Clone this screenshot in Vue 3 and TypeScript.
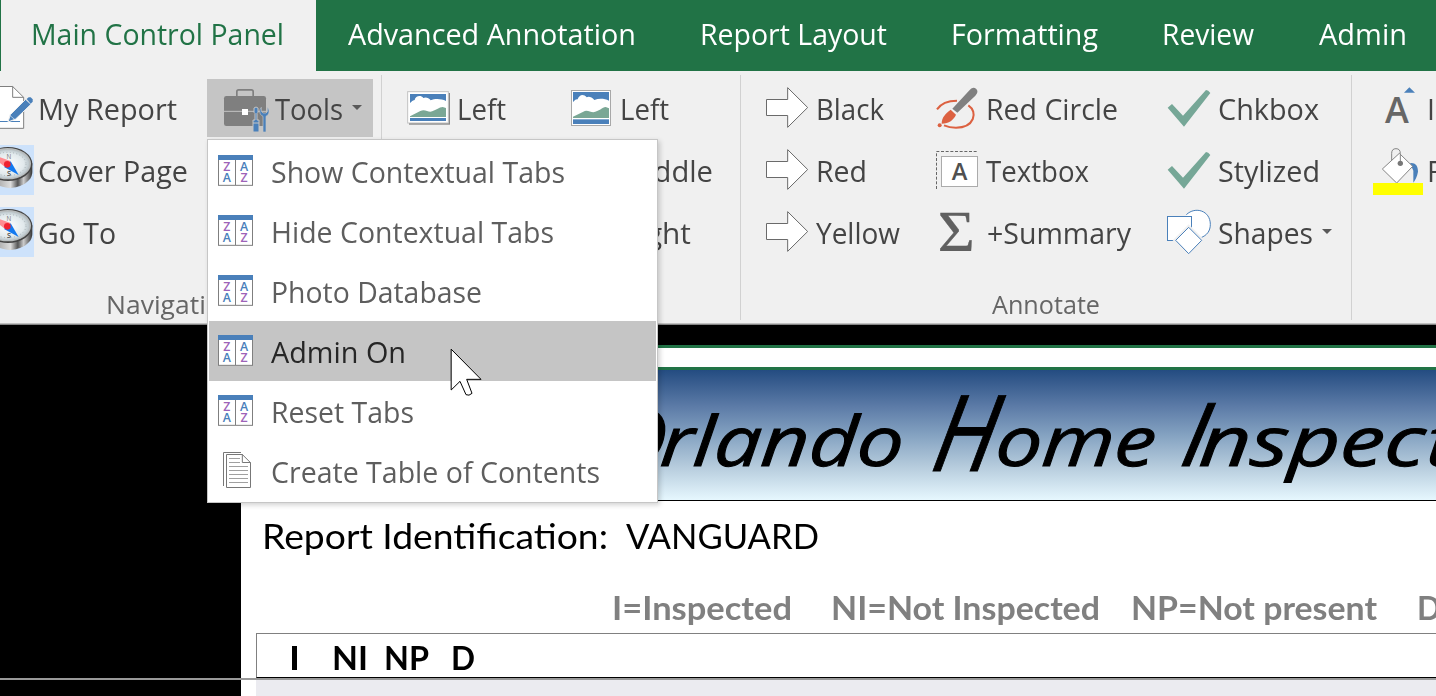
<script setup lang="ts">
import type { Directive } from 'vue'

interface Tab { label: string; width: number; text: number }
interface Command { label: string; text: number; icon: string; box: string; iconWidth: number; caret?: boolean; active?: boolean }
interface Group { name: string; caption: string; columns: Command[][] }
interface MenuItem { label: string; text: number; icon: 'sort' | 'page'; hover?: boolean }
interface Stroke { text: string; x: number; y: number; size: number; length: number; skew: number }

// Condenses or widens a label so that it occupies exactly the given width.
const vFit: Directive<HTMLElement, number> = {
  mounted(el, { value }) {
    const natural = el.getBoundingClientRect().width
    if (!natural) return
    el.style.transform = `scaleX(${value / natural})`
    el.style.marginRight = `${value - natural}px`
  }
}

const tabs: Tab[] = [
  { label: 'Main Control Panel', width: 315, text: 253 },
  { label: 'Advanced Annotation', width: 351, text: 288 },
  { label: 'Report Layout', width: 253, text: 187 },
  { label: 'Formatting', width: 208, text: 147 },
  { label: 'Review', width: 160, text: 92 },
  { label: 'Admin', width: 149, text: 88 }
]

const groups: Group[] = [
  {
    name: 'navigation', caption: 'Navigation', columns: [
      [
        { label: 'My Report', text: 139, icon: 'report', box: '0 12 111 174', iconWidth: 37 },
        { label: 'Cover Page', text: 150, icon: 'compass', box: '0 198 111 174', iconWidth: 37 },
        { label: 'Go To', text: 78, icon: 'compass', box: '0 198 111 174', iconWidth: 37 }
      ],
      [{ label: 'Tools', text: 68, icon: 'toolbox', box: '6 12 201 174', iconWidth: 67, caret: true, active: true }]
    ]
  },
  {
    name: 'pictures', caption: '', columns: [
      [{ label: 'Left', text: 49, icon: 'photo', box: '0 12 168 174', iconWidth: 56 }],
      [
        { label: 'Left', text: 49, icon: 'inline', box: '480 12 177 174', iconWidth: 59 },
        { label: 'Middle', text: 93, icon: 'none', box: '480 198 177 174', iconWidth: 59 },
        { label: 'Right', text: 71, icon: 'none', box: '480 384 177 174', iconWidth: 59 }
      ]
    ]
  },
  {
    name: 'annotate', caption: 'Annotate', columns: [
      [
        { label: 'Black', text: 68, icon: 'arrow', box: '30 12 195 174', iconWidth: 65 },
        { label: 'Red', text: 51, icon: 'arrow', box: '30 12 195 174', iconWidth: 65 },
        { label: 'Yellow', text: 84, icon: 'arrow', box: '30 12 195 174', iconWidth: 65 }
      ],
      [
        { label: 'Red Circle', text: 132, icon: 'brush', box: '0 12 165 174', iconWidth: 55 },
        { label: 'Textbox', text: 103, icon: 'textbox', box: '0 198 165 174', iconWidth: 55 },
        { label: '+Summary', text: 144, icon: 'sigma', box: '0 384 165 174', iconWidth: 56 }
      ],
      [
        { label: 'Chkbox', text: 101, icon: 'check', box: '30 12 171 174', iconWidth: 57 },
        { label: 'Stylized', text: 102, icon: 'check', box: '30 12 171 174', iconWidth: 57 },
        { label: 'Shapes', text: 95, icon: 'shapes', box: '30 384 171 174', iconWidth: 57, caret: true }
      ]
    ]
  },
  {
    name: 'font', caption: '', columns: [
      [
        { label: 'I', text: 8, icon: 'grow', box: '660 12 168 174', iconWidth: 56 },
        { label: 'F', text: 15, icon: 'bucket', box: '660 198 168 174', iconWidth: 56 }
      ]
    ]
  }
]

const menu: MenuItem[] = [
  { label: 'Show Contextual Tabs', text: 294, icon: 'sort' },
  { label: 'Hide Contextual Tabs', text: 283, icon: 'sort' },
  { label: 'Photo Database', text: 211, icon: 'sort' },
  { label: 'Admin On', text: 135, icon: 'sort', hover: true },
  { label: 'Reset Tabs', text: 143, icon: 'sort' },
  { label: 'Create Table of Contents', text: 329, icon: 'page' }
]

const lettering: Stroke[] = [
  { text: 'O', x: 354, y: 96, size: 80, length: 71, skew: -3 },
  { text: 'rlando', x: 418, y: 96, size: 69, length: 243, skew: -5 },
  { text: 'H', x: 688, y: 101, size: 106, length: 62, skew: -11 },
  { text: 'ome', x: 753, y: 96, size: 69, length: 160, skew: -5 },
  { text: 'I', x: 937, y: 96, size: 88, length: 25, skew: -11 },
  { text: 'nspec', x: 957, y: 96, size: 69, length: 225, skew: -5 },
  { text: 't', x: 1184, y: 96, size: 69, length: 28, skew: -5 }
]
</script>

<template>
  <div class="window">
    <nav class="tabs">
      <div v-for="(tab, i) in tabs" :key="tab.label" class="tab" :class="{ current: i === 0 }" :style="{ width: tab.width + 'px' }">
        <span v-fit="tab.text" class="fit">{{ tab.label }}</span>
      </div>
    </nav>

    <section class="ribbon">
      <div v-for="group in groups" :key="group.name" class="group" :class="group.name">
        <div class="columns">
          <div v-for="(column, c) in group.columns" :key="c" class="column">
            <div v-for="cmd in column" :key="cmd.label" class="command" :class="{ active: cmd.active }">
              <svg class="icon" :width="cmd.iconWidth" height="58" :viewBox="cmd.box">
                <g v-if="cmd.icon === 'report'">
                  <path d="M-12 34.500H38L71 67V160H-12Z" fill="#fff" stroke="#7f7f7f" stroke-width="3" />
                  <path d="M38 34V67H71" fill="none" stroke="#7f7f7f" stroke-width="3" />
                  <path d="M0 139.500H60" stroke="#4a80ba" stroke-width="3" />
                  <path d="M24 141L31 119L77 73L93 88L47 132Z" fill="#4a80ba" stroke="#f0f0f0" stroke-width="3" />
                  <path d="M80 72L86 67H92L98 73V80L92 86Z" fill="#4a80ba" />
                  <path d="M29 121L45 134" stroke="#dce8f4" stroke-width="2" />
                </g>
                <g v-else-if="cmd.icon === 'compass'">
                  <defs>
                    <linearGradient id="rim" x1="0" x2="1">
                      <stop offset="0" stop-color="#777" /><stop offset=".55" stop-color="#ddd" /><stop offset=".7" stop-color="#555" /><stop offset=".82" stop-color="#ccc" /><stop offset="1" stop-color="#333" />
                    </linearGradient>
                    <radialGradient id="dial"><stop offset="0" stop-color="#fff" /><stop offset=".75" stop-color="#e1e9ec" /><stop offset="1" stop-color="#bac5ca" /></radialGradient>
                  </defs>
                  <rect x="0" y="210" width="102" height="150" fill="#cde2fb" />
                  <path d="M-48 270V286C-40 320 0 338 28 339C65 337 97 318 97 290V265Z" fill="url(#rim)" />
                  <ellipse cx="24" cy="267" rx="73" ry="51" fill="#444" />
                  <ellipse cx="23" cy="266" rx="70" ry="47" fill="#b8bcbd" />
                  <ellipse cx="23" cy="267" rx="65" ry="43" fill="url(#dial)" />
                  <ellipse cx="23" cy="267" rx="55" ry="35" fill="none" stroke="#9aa4a8" stroke-width="3" stroke-dasharray="2 8" />
                  <text x="27" y="251" font-size="19" fill="#777" class="glyph">N</text>
                  <text x="27" y="304" font-size="22" fill="#444" class="glyph heavy">S</text>
                  <path d="M-10 243L32 258L12 274L-10 256Z" fill="#ff8c91" />
                  <path d="M32 259L56 300L12 276Z" fill="#1379f0" />
                  <circle cx="22" cy="268" r="10" fill="#f02230" />
                </g>
                <g v-else-if="cmd.icon === 'toolbox'">
                  <path d="M95.500 63V50Q95.500 44.500 101 44.500H139Q144.500 44.500 144.500 50V63" fill="none" stroke="#7f7f7f" stroke-width="5" />
                  <rect x="57" y="63" width="126" height="90" rx="7" fill="#7f7f7f" />
                  <path d="M57 109H183" stroke="#c5c5c5" stroke-width="3" />
                  <rect x="111" y="102" width="18" height="18" fill="#fff" />
                  <path d="M147 99L153 96L159 99V112L156 115V135H162V171H144V135H150V115L147 112Z" fill="#4a80ba" stroke="#c5c5c5" stroke-width="3" />
                  <path d="M144 144H162" stroke="#c5c5c5" stroke-width="3" />
                  <path d="M169 97C162 104 162 119 174 124V171H183V124C195 118 194 104 187 97V110L183 114H174L169 109Z" fill="#4a80ba" stroke="#c5c5c5" stroke-width="2" />
                </g>
                <g v-else-if="cmd.icon === 'photo'">
                  <rect x="27" y="54" width="123" height="95" fill="#888" class="soft" />
                  <rect x="23" y="50" width="122" height="94" fill="#fff" stroke="#c2c2c2" stroke-width="3" />
                  <path d="M30 57H138V78C124 71 105 70 92 76C86 67 76 66 70 69C62 58 46 63 44 75C37 76 34 81 30 84Z" fill="#4a80ba" />
                  <path d="M30 126V124L61 108C72 102 82 109 91 110C107 107 118 96 128 96L138 99V126Z" fill="#7aa795" />
                  <rect x="30" y="129" width="108" height="9" fill="#4a80ba" />
                </g>
                <g v-else-if="cmd.icon === 'inline'">
                  <rect x="514.500" y="46.500" width="117" height="105" fill="#fff" stroke="#a8a8a8" stroke-width="3" />
                  <path d="M519 51H627V77C613 70 596 70 583 75C575 65 565 63 560 67C550 55 537 60 533 73C526 72 523 79 519 81Z" fill="#4a80ba" />
                  <path d="M519 129V125L550 110C560 103 570 111 580 112C597 109 607 97 617 96L627 100V129Z" fill="#7aa795" />
                  <rect x="519" y="133" width="108" height="14" fill="#4a80ba" />
                </g>
                <path v-else-if="cmd.icon === 'arrow'" d="M79.500 73.500H143V38L203 97.500L143 157V121.500H79.500Z" fill="#fff" stroke="#6a6a6a" stroke-width="3" />
                <g v-else-if="cmd.icon === 'brush'">
                  <path d="M21 103C33 85 56 77 81 77M115 91C145 111 133 158 78 158C63 158 51 155 42 151" fill="none" stroke="#dc6141" stroke-width="6" />
                  <path d="M67 101L117 47Q128 33 139 42Q147 50 136 62L82 113Z" fill="#808080" />
                  <path d="M62 104L78 119C71 135 57 145 35 146C35 127 46 116 62 104Z" fill="#dc6141" />
                  <circle cx="29" cy="151" r="6" fill="#dc6141" />
                </g>
                <g v-else-if="cmd.icon === 'textbox'">
                  <path d="M19.500 342V229.500H144" fill="none" stroke="#666" stroke-width="3" stroke-dasharray="9 5" />
                  <rect x="34.500" y="244.500" width="108" height="90" fill="#fff" stroke="#ababab" stroke-width="3" />
                  <text x="88.500" y="315" font-size="71" fill="#505050" class="glyph heavy">A</text>
                </g>
                <text v-else-if="cmd.icon === 'sigma'" x="22" y="528" font-size="173" textLength="111" lengthAdjust="spacingAndGlyphs" fill="#606060" class="sigma">Σ</text>
                <path v-else-if="cmd.icon === 'check'" d="M53 98L66 87L99 122L168 45Q175 45 181 54L102 155Z" fill="#76a797" />
                <g v-else-if="cmd.icon === 'shapes'" fill="#fff" stroke="#4a80ba" stroke-width="3">
                  <path d="M109 419C136 393 181 407 181 448C181 469 170 481 153 488L109 448Z" stroke="none" />
                  <path d="M109 419C136 393 181 407 181 448C181 469 170 481 153 488" fill="none" />
                  <rect x="52.500" y="424.500" width="72" height="72" />
                  <path d="M116 448L164 496L116 544L68 496Z" fill="#f0f0f0" stroke="none" />
                  <path d="M116 457L155 496L116 536L77 496Z" />
                </g>
                <g v-else-if="cmd.icon === 'grow'">
                  <text x="741" y="144" font-size="108" fill="#666" class="glyph heavy">A</text>
                  <path d="M762 53L778 37L795 53Z" fill="#4a80ba" />
                </g>
                <g v-else-if="cmd.icon === 'bucket'">
                  <path d="M780 264C800 262 804 277 804 290C802 305 794 317 790 323V287Z" fill="#4a80ba" />
                  <path d="M748 235L788 274L740 324L697 282Z" fill="#fff" stroke="#858585" stroke-width="3" />
                  <path d="M725 256V235Q725 221 738 221Q751 221 751 236V263" fill="none" stroke="#858585" stroke-width="3" />
                  <circle cx="751" cy="265" r="8" fill="#777" />
                  <rect x="669" y="324" width="150" height="36" fill="#ff0" />
                </g>
              </svg>
              <span v-fit="cmd.text" class="fit label">{{ cmd.label }}</span>
              <svg v-if="cmd.caret" class="caret" width="10" height="5" viewBox="0 0 10 5"><path d="M0 0H10L5 5Z" fill="#595959" /></svg>
            </div>
          </div>
        </div>
        <div class="caption"><span v-if="group.caption" v-fit="group.name === 'annotate' ? 108 : 132" class="fit">{{ group.caption }}</span></div>
      </div>
    </section>

    <main class="workspace">
      <div class="sheet">
        <div class="blank-row"></div>
        <header class="banner">
          <svg width="1195" height="130" viewBox="0 0 1195 130">
            <g v-for="s in lettering" :key="s.text" :transform="`translate(${s.x} ${s.y}) skewX(${s.skew})`">
              <text :font-size="s.size" :textLength="s.length" lengthAdjust="spacingAndGlyphs">{{ s.text }}</text>
            </g>
          </svg>
        </header>
        <div class="identification">
          <span v-fit="346" class="fit">Report Identification:</span>
          <span v-fit="193" class="fit value">VANGUARD</span>
        </div>
        <div class="legend">
          <span v-fit="180" class="fit">I=Inspected</span>
          <span v-fit="269" class="fit">NI=Not Inspected</span>
          <span v-fit="246" class="fit">NP=Not present</span>
          <span v-fit="24" class="fit">D</span>
        </div>
        <div class="table-head">
          <span v-fit="11" class="fit">I</span>
          <span v-fit="36" class="fit">NI</span>
          <span v-fit="45" class="fit">NP</span>
          <span v-fit="24" class="fit">D</span>
        </div>
        <div class="table-body"></div>
      </div>
      <div class="freeze-line"></div>
    </main>

    <div class="menu">
      <div v-for="item in menu" :key="item.label" class="menu-item" :class="{ hover: item.hover }">
        <svg v-if="item.icon === 'sort'" width="62" height="60" viewBox="12 198 186 180">
          <rect x="40.500" y="243" width="102" height="88" fill="#fff" stroke="#7f7f7f" stroke-width="3" />
          <path d="M91.500 254V330" stroke="#7f7f7f" stroke-width="3" />
          <rect x="39" y="240" width="105" height="15" fill="#4a80ba" />
          <g class="glyph sort" font-size="37">
            <text x="65.500" y="288" fill="#9d63b8">Z</text><text x="65.500" y="321" fill="#4a80ba">A</text>
            <text x="117.500" y="288" fill="#4a80ba">A</text><text x="117.500" y="321" fill="#9d63b8">Z</text>
          </g>
        </svg>
        <svg v-else width="62" height="60" viewBox="12 363 186 180">
          <path d="M55.500 498V397.500H108" fill="none" stroke="#777" stroke-width="3" />
          <path d="M64.500 403.500H112L136.500 428V502.500H64.500Z" fill="#fff" stroke="#777" stroke-width="3" />
          <path d="M112 403V427.500H137" fill="none" stroke="#777" stroke-width="3" />
          <path d="M72 415.500H105M72 427.500H105M72 439.500H129M72 451.500H129M72 463.500H129M72 475.500H129M72 487.500H129" stroke="#a0a0a0" stroke-width="3" />
        </svg>
        <span v-fit="item.text" class="fit">{{ item.label }}</span>
      </div>
    </div>

    <svg class="pointer" width="34" height="50" viewBox="737 85 102 150">
      <path d="M740.500 88.500V211L767 185L785 225Q794 230 803 221L787 179H830Z" fill="#fff" stroke="#000" stroke-width="3" />
    </svg>
  </div>
</template>

<style>
body { margin: 0; overflow: hidden; }
</style>

<style scoped>
.window { position: relative; width: 1436px; height: 696px; overflow: hidden; background: #000; font-family: "Open Sans", "Noto Sans", sans-serif; font-size: 29px; color: #444; }
.fit { display: inline-block; flex: none; white-space: pre; transform-origin: left center; }
.tabs { display: flex; box-sizing: border-box; height: 71px; padding-left: 1px; background: #217346; }
.tab { display: flex; flex: none; justify-content: center; line-height: 69px; color: #fff; font-size: 28.5px; }
.tab.current { box-sizing: border-box; padding-right: 2px; background: #f0f0f0; color: #217346; }
.ribbon { display: grid; grid-template-columns: 382px 359px 611px 84px; box-sizing: border-box; height: 254px; padding-top: 4px; background: #f0f0f0; border-bottom: 1px solid #858585; box-shadow: inset 0 -1px #c0c0c0; }
.group { box-sizing: border-box; height: 245px; padding-top: 4px; border-right: 1px solid #d1d1d1; }
.group.font { border: 0; overflow: hidden; }
.columns { display: grid; height: 194px; }
.navigation .columns { grid-template-columns: 207px 166px; }
.pictures .columns { grid-template-columns: 160px 180px; padding-left: 18px; }
.annotate .columns { grid-template-columns: 180px 230px 190px; padding-left: 9px; }
.font .columns { padding-left: 18px; }
.column { display: flex; flex-direction: column; gap: 4px; }
.command { display: flex; align-items: center; height: 58px; line-height: 58px; white-space: nowrap; }
.command.active { background: #c5c5c5; }
.icon { display: block; flex: none; }
.label { margin-left: 1px; padding-top: 2px; }
.caret { margin: -2px 0 0 9px; }
.caption { display: flex; justify-content: center; margin-top: 15px; font-size: 26px; line-height: 32px; color: #666; }
.navigation .caption { justify-content: flex-start; padding-left: 106px; }
.glyph { font-family: "Open Sans", sans-serif; text-anchor: middle; }
.heavy { font-weight: 600; }
.sort { font-weight: 600; }
.sigma { font-family: "Liberation Serif", serif; stroke: #606060; stroke-width: 1px; }
.soft { filter: blur(2px); }

.workspace { position: relative; box-sizing: border-box; height: 371px; padding-top: 20px; background: #000; }
.sheet { width: 1195px; height: 351px; margin-left: 241px; background: #fff; color: #000; font-family: Lato, "Liberation Sans", sans-serif; }
.blank-row { box-sizing: border-box; height: 25px; border: solid #217346; border-width: 3px 0; }
.banner { height: 130px; border-bottom: 1px solid #000; background: linear-gradient(#244c81, #5c7ba7 28%, #84a2c1 50%, #b5cbdc 74%, #e6f7fe); font-family: "Open Sans", sans-serif; font-style: italic; }
.banner svg { display: block; }
.banner text { stroke: #000; stroke-width: 1px; }
.identification { display: flex; height: 72px; padding-left: 21px; line-height: 68px; font-size: 35px; }
.value { margin-left: 18px; }
.legend { display: grid; justify-items: start; grid-template-columns: 219px 300px 286px 30px; height: 60px; padding-left: 371px; overflow: hidden; line-height: 70px; font-size: 32px; font-weight: 700; color: #808080; }
.table-head { display: grid; justify-items: start; grid-template-columns: 43px 52px 67px 40px; box-sizing: border-box; height: 45px; margin-left: 15px; padding-left: 32px; border: solid #808080; border-width: 1px 0 1px 1px; border-bottom-color: #000; line-height: 48px; font-size: 32px; font-weight: 700; }
.table-body { height: 18px; margin-left: 15px; background: #ebebf0; }
.freeze-line { position: absolute; left: 0; top: 353px; width: 100%; height: 2px; background: #999; }

.menu { position: absolute; left: 207px; top: 139px; box-sizing: border-box; width: 451px; height: 364px; padding: 1px; background: #fff; border: 1px solid #c6c6c6; box-shadow: 2px 2px 5px rgba(0, 0, 0, .18); color: #5e5e5e; }
.menu-item { display: flex; height: 60px; line-height: 62px; }
.menu-item.hover { background: #c5c5c5; color: #262626; }
.pointer { position: absolute; left: 450px; top: 348px; }
</style>
